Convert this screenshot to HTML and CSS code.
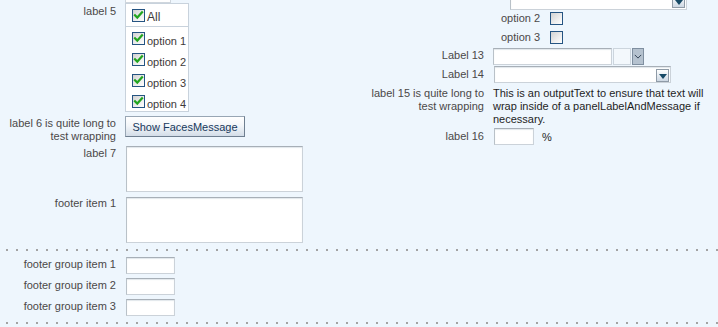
FILE: index.html
```html
<!DOCTYPE html>
<html>
<head>
<meta charset="utf-8">
<link rel="stylesheet" href="styles.css">
</head>
<body>
<div class="page">
  <div class="columns">
    <div class="col left">
      <div class="row stub-row">
        <div class="label"></div>
        <div class="field"><div class="stub"></div></div>
      </div>
      <div class="row r-label5">
        <div class="label">label 5</div>
        <div class="field">
          <div class="checklist">
            <div class="cl-all">
              <span class="cb"><svg class="tick" viewBox="0 0 11 11" width="11" height="11"><path d="M2 5.2 L4.3 7.6 L9 2.4" /></svg></span><span class="cl-text">All</span>
            </div>
            <div class="cl-opts">
              <div class="cl-opt"><span class="cb"><svg class="tick" viewBox="0 0 11 11" width="11" height="11"><path d="M2 5.2 L4.3 7.6 L9 2.4" /></svg></span><span class="cl-text">option 1</span></div>
              <div class="cl-opt"><span class="cb"><svg class="tick" viewBox="0 0 11 11" width="11" height="11"><path d="M2 5.2 L4.3 7.6 L9 2.4" /></svg></span><span class="cl-text">option 2</span></div>
              <div class="cl-opt"><span class="cb"><svg class="tick" viewBox="0 0 11 11" width="11" height="11"><path d="M2 5.2 L4.3 7.6 L9 2.4" /></svg></span><span class="cl-text">option 3</span></div>
              <div class="cl-opt"><span class="cb"><svg class="tick" viewBox="0 0 11 11" width="11" height="11"><path d="M2 5.2 L4.3 7.6 L9 2.4" /></svg></span><span class="cl-text">option 4</span></div>
            </div>
          </div>
        </div>
      </div>
      <div class="row r-label6">
        <div class="label">label 6 is quite long to test wrapping</div>
        <div class="field"><button class="btn" type="button">Show FacesMessage</button></div>
      </div>
      <div class="row r-label7">
        <div class="label">label 7</div>
        <div class="field"><div class="textarea"></div></div>
      </div>
      <div class="row r-footer1">
        <div class="label">footer item 1</div>
        <div class="field"><div class="textarea"></div></div>
      </div>
    </div>
    <div class="col right">
      <div class="row r-topsel">
        <div class="label"></div>
        <div class="field">
          <div class="clip-top">
            <div class="select wide-top"><span class="sel-btn"><span class="tri"></span></span></div>
          </div>
        </div>
      </div>
      <div class="row r-opt2">
        <div class="label"></div>
        <div class="field opt-field"><span class="opt-text">option 2</span><span class="cb"></span></div>
      </div>
      <div class="row r-opt3">
        <div class="label"></div>
        <div class="field opt-field"><span class="opt-text">option 3</span><span class="cb"></span></div>
      </div>
      <div class="row r-l13">
        <div class="label">Label 13</div>
        <div class="field combo">
          <div class="input in-13"></div>
          <div class="mini-box"></div>
          <span class="chev-btn"><svg viewBox="0 0 10 6" width="8" height="5"><path d="M1 1 L5 5 L9 1" /></svg></span>
        </div>
      </div>
      <div class="row r-l14">
        <div class="label">Label 14</div>
        <div class="field">
          <div class="select sel-14"><span class="sel-btn"><span class="tri"></span></span></div>
        </div>
      </div>
      <div class="row r-l15">
        <div class="label">label 15 is quite long to test wrapping</div>
        <div class="field out-text">This is an outputText to ensure that text will wrap inside of a panelLabelAndMessage if necessary.</div>
      </div>
      <div class="row r-l16">
        <div class="label">label 16</div>
        <div class="field combo"><div class="input in-16"></div><span class="pct">%</span></div>
      </div>
    </div>
  </div>
  <div class="dots"></div>
  <div class="footer-group">
    <div class="row fg-row">
      <div class="label">footer group item 1</div>
      <div class="field"><div class="input in-fg"></div></div>
    </div>
    <div class="row fg-row">
      <div class="label">footer group item 2</div>
      <div class="field"><div class="input in-fg"></div></div>
    </div>
    <div class="row fg-row">
      <div class="label">footer group item 3</div>
      <div class="field"><div class="input in-fg"></div></div>
    </div>
  </div>
  <div class="dots"></div>
</div>
</body>
</html>
```
FILE: styles.css
```css
* { box-sizing: border-box; }

body {
  margin: 0;
  background: #eef6fd;
  font-family: "Liberation Sans", Arial, sans-serif;
  font-size: 11px;
  color: #4b4848;
}

.page {
  width: 718px;
  height: 327px;
  overflow: hidden;
}

.columns {
  display: flex;
  height: 249px;
}

.left { width: 360px; }
.right { flex: 1; }

.row {
  display: flex;
  align-items: flex-start;
}

.label {
  text-align: right;
  line-height: 13px;
  padding-top: 2px;
  flex: none;
}

.left .label, .footer-group .label { width: 116px; }
.left .field, .footer-group .field { margin-left: 10px; }

.right .label { width: 124px; }
.right .field { margin-left: 9px; }

/* partial input at very top */
.stub-row { height: 3px; }
.stub-row .label { padding: 0; }
.stub {
  margin-left: -1px;
  width: 46px;
  height: 3px;
  background: #fff;
  border: 1px solid #cfd6dd;
  border-top: none;
}

/* checkbox list */
.checklist {
  margin-left: -1px;
  width: 64px;
  height: 109px;
  background: #fff;
  border: 1px solid #c8d2dc;
}
.cl-all {
  height: 23px;
  border-bottom: 1px solid #c8d2dc;
  padding: 5px 0 0 6px;
  display: flex;
  align-items: flex-start;
}
.cl-opts { padding: 5px 0 0 6px; }
.cl-opt {
  height: 21px;
  display: flex;
  align-items: flex-start;
}
.cl-text {
  margin-left: 2px;
  line-height: 13px;
  padding-top: 3px;
  color: #3e3a3a;
}
.cl-all .cl-text { font-size: 12px; padding-top: 2px; }

.cb {
  flex: none;
  display: inline-flex;
  align-items: center;
  justify-content: center;
  width: 13px;
  height: 13px;
  border: 1px solid #255482;
  background: linear-gradient(135deg, #d2d2d2 0%, #ececec 55%, #ffffff 100%);
}
.tick path {
  fill: none;
  stroke: #22a51f;
  stroke-width: 2.2;
  stroke-linecap: square;
}

/* button */
.r-label6 { margin-top: 4px; height: 26px; }
.r-label6 .label { padding-top: 1px; }
.btn {
  margin-left: -1px;
  width: 120px;
  height: 21px;
  padding: 0;
  font-family: "Liberation Sans", Arial, sans-serif;
  font-size: 11px;
  color: #17395c;
  background: linear-gradient(#ffffff 0%, #f3f6f9 45%, #d3dde8 100%);
  border: 1px solid #98a6b4;
  border-right-color: #6f7f90;
  border-bottom-color: #6f7f90;
  border-radius: 0;
}

/* inputs */
.textarea, .input, .select {
  background: #fff;
  border: 1px solid #cbd2d9;
  border-top-color: #a7afb7;
  border-left-color: #b9c1c8;
  box-shadow: inset 0 1px 1px #e2e7eb;
}
.textarea { width: 177px; height: 46px; }

.r-label7 { margin-top: 4px; }
.r-label7 .label { padding-top: 1px; }
.r-footer1 { margin-top: 5px; }
.r-footer1 .label { padding-top: 0; }

/* right column */
.clip-top {
  height: 10px;
  overflow: hidden;
  margin-left: 17px;
}
.select {
  position: relative;
  height: 17px;
}
.wide-top { width: 177px; height: 18px; margin-top: -8px; }
.sel-btn {
  position: absolute;
  right: 1px;
  top: 2px;
  width: 13px;
  height: 13px;
  background: linear-gradient(#ffffff, #cdd8e3);
  border: 1px solid #8f9ba7;
  display: flex;
  align-items: center;
  justify-content: center;
}
.tri {
  width: 0;
  height: 0;
  border-left: 4px solid transparent;
  border-right: 4px solid transparent;
  border-top: 5px solid #174a66;
  margin-top: 1px;
}

.r-opt2 { margin-top: 2px; height: 19px; }
.opt-field {
  display: flex;
  align-items: flex-start;
  padding-left: 8px;
}
.opt-text {
  width: 49px;
  line-height: 13px;
  padding-top: 0;
}
.r-opt3 { height: 17px; }

.combo { display: flex; align-items: flex-start; }
.input { height: 17px; }
.in-13 { width: 119px; }
.mini-box {
  margin-left: 1px;
  width: 18px;
  height: 17px;
  background: #f3f8fc;
  border: 1px solid #ccd5dd;
}
.chev-btn {
  margin-left: 1px;
  width: 12px;
  height: 17px;
  background: #b5c2cf;
  border: 1px solid #7f8fa0;
  display: flex;
  align-items: center;
  justify-content: center;
}
.chev-btn path {
  fill: none;
  stroke: #2e3f52;
  stroke-width: 1.2;
}
.r-l13 .label { padding-top: 1px; }
.r-l13 .field { margin-left: 9px; }

.r-l14 { margin-top: 1px; }
.r-l14 .field { margin-left: 10px; }
.sel-14 { width: 177px; }

.r-l15 { margin-top: 4px; }
.r-l15 .label { padding-top: 0; }
.out-text {
  width: 222px;
  line-height: 13px;
  color: #1e1e1e;
}

.r-l16 { margin-top: 2px; }
.r-l16 .field { margin-left: 10px; }
.in-16 { width: 40px; }
.pct {
  margin-left: 8px;
  line-height: 13px;
  padding-top: 3px;
  color: #1e1e1e;
}

/* dotted separators */
.dots {
  height: 2px;
  margin-left: 6px;
  background-image: linear-gradient(to right, #a3a3a3 2px, transparent 2px);
  background-size: 10px 2px;
}

.footer-group { padding-top: 6px; height: 71px; }
.fg-row { height: 21px; }
.fg-row .label { padding-top: 1px; }
.in-fg { width: 49px; }
```
